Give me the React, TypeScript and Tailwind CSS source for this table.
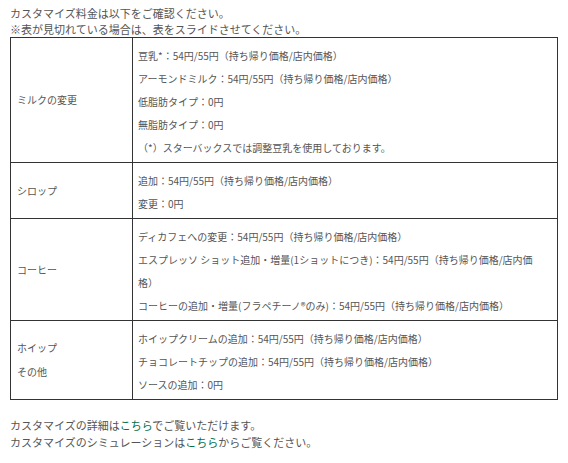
import React from "react";

const font = { fontFamily: '"Noto Sans CJK JP", "Noto Sans", sans-serif' };

const rows: { head: string[]; lines: string[] }[] = [
  {
    head: ["ミルクの変更"],
    lines: [
      "豆乳*：54円/55円（持ち帰り価格/店内価格）",
      "アーモンドミルク：54円/55円（持ち帰り価格/店内価格）",
      "低脂肪タイプ：0円",
      "無脂肪タイプ：0円",
      "（*）スターバックスでは調整豆乳を使用しております。",
    ],
  },
  {
    head: ["シロップ"],
    lines: ["追加：54円/55円（持ち帰り価格/店内価格）", "変更：0円"],
  },
  {
    head: ["コーヒー"],
    lines: [
      "ディカフェへの変更：54円/55円（持ち帰り価格/店内価格）",
      "エスプレッソ ショット追加・増量(1ショットにつき)：54円/55円（持ち帰り価格/店内価格）",
      "コーヒーの追加・増量(フラペチーノ®のみ)：54円/55円（持ち帰り価格/店内価格）",
    ],
  },
  {
    head: ["ホイップ", "その他"],
    lines: [
      "ホイップクリームの追加：54円/55円（持ち帰り価格/店内価格）",
      "チョコレートチップの追加：54円/55円（持ち帰り価格/店内価格）",
      "ソースの追加：0円",
    ],
  },
];

export default function App() {
  return (
    <div className="w-[568px] h-[463px] bg-white text-[#555] pt-[5px]" style={font}>
      <div className="pl-[10px] text-[11px] leading-[16px]">
        <p>カスタマイズ料金は以下をご確認ください。</p>
        <p>※表が見切れている場合は、表をスライドさせてください。</p>
      </div>
      <table className="ml-[10px] w-[548px] border-collapse border border-[#333] text-[10px]">
        <tbody>
          {rows.map((r, i) => (
            <tr key={i} className="border-b border-[#333]">
              <td className="w-[122px] border-r border-[#333] pl-[6px] align-middle leading-[24px]">
                {r.head.map((h) => (
                  <div key={h}>{h}</div>
                ))}
              </td>
              <td className="pl-[5px] pr-[10px] pt-[6px] pb-[3px] align-top leading-[23px]">
                {r.lines.map((l) => (
                  <div key={l}>{l}</div>
                ))}
              </td>
            </tr>
          ))}
        </tbody>
      </table>
      <div className="pl-[10px] pt-[17px] text-[11px] leading-[17px]">
        <p>
          カスタマイズの詳細は<span className="text-[#00704a]">こちら</span>でご覧いただけます。
        </p>
        <p>
          カスタマイズのシミュレーションは<span className="text-[#00704a]">こちら</span>からご覧ください。
        </p>
      </div>
    </div>
  );
}
